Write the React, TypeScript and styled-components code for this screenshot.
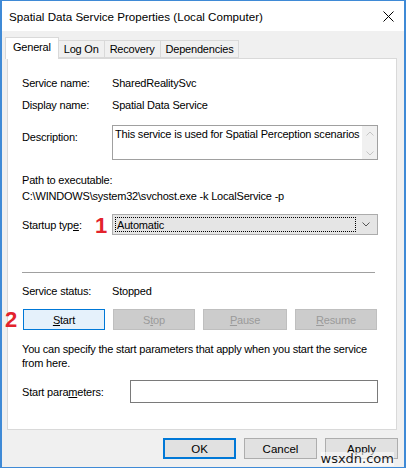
import React from "react";
import styled, { createGlobalStyle } from "styled-components";

const GlobalStyle = createGlobalStyle`
  html, body {
    margin: 0;
    padding: 0;
    background: #ffffff;
  }
  body {
    font-family: "Liberation Sans", Arial, sans-serif;
    font-size: 11px;
    letter-spacing: -0.2px;
    color: #000000;
  }
`;

const Window = styled.div`
  position: relative;
  box-sizing: border-box;
  width: 406px;
  height: 468px;
  border: 1px solid #3f8ad6;
  border-left-width: 2px;
  border-right-width: 2px;
  background: #f0f0f0;
  display: flex;
  flex-direction: column;
  overflow: hidden;
`;

const TitleBar = styled.div`
  height: 30px;
  background: #ffffff;
  display: flex;
  align-items: center;
  justify-content: space-between;
  padding: 0 10px 0 7px;
  font-size: 11.6px;
  letter-spacing: 0;
`;

const CloseGlyph = styled.svg`
  width: 11px;
  height: 11px;
`;

const TabStrip = styled.div`
  display: flex;
  align-items: flex-end;
  height: 21px;
  margin-top: 6px;
  padding-left: 3px;
  position: relative;
  z-index: 1;
`;

const Tab = styled.div<{ $active?: boolean }>`
  box-sizing: border-box;
  height: ${(p) => (p.$active ? "22px" : "18px")};
  padding: 0 ${(p) => (p.$active ? "7px" : "5px")};
  margin-bottom: ${(p) => (p.$active ? "-1px" : "0")};
  display: flex;
  align-items: center;
  background: ${(p) => (p.$active ? "#ffffff" : "#f0f0f0")};
  border: 1px solid #d9d9d9;
  border-bottom: ${(p) => (p.$active ? "none" : "1px solid #d9d9d9")};
  margin-left: ${(p) => (p.$active ? "0" : "-1px")};
  padding-bottom: ${(p) => (p.$active ? "4px" : "0")};
`;

const Panel = styled.div`
  box-sizing: border-box;
  margin: 0 7px 0 5px;
  height: 372px;
  background: #ffffff;
  border: 1px solid #d9d9d9;
  padding: 16px 18px 0 14px;
  display: flex;
  flex-direction: column;
`;

const Row = styled.div<{ $gap?: number; $top?: boolean }>`
  display: flex;
  align-items: ${(p) => (p.$top ? "flex-start" : "center")};
  margin-top: ${(p) => p.$gap ?? 0}px;
`;

const Label = styled.div<{ $w?: number; $pad?: number }>`
  width: ${(p) => p.$w ?? 90}px;
  flex-shrink: 0;
  line-height: 16px;
  padding-top: ${(p) => p.$pad ?? 0}px;
`;

const Line = styled.div<{ $gap?: number }>`
  line-height: 16px;
  margin-top: ${(p) => p.$gap ?? 0}px;
  white-space: nowrap;
`;

const DescBox = styled.div`
  box-sizing: border-box;
  width: 267px;
  height: 35px;
  border: 1px solid #a0a0a0;
  display: flex;
`;

const DescText = styled.div`
  flex: 1;
  padding: 1px 2px;
  line-height: 15px;
  white-space: nowrap;
  overflow: hidden;
`;

const ScrollTrack = styled.div`
  width: 15px;
  background: #f0f0f0;
  display: flex;
  flex-direction: column;
  justify-content: space-between;
  align-items: center;
  padding: 5px 0 3px;
`;

const Chevron = styled.svg`
  width: 8px;
  height: 5px;
`;

const Select = styled.div`
  position: relative;
  box-sizing: border-box;
  width: 267px;
  height: 21px;
  background: #e5e5e5;
  border: 1px solid #acacac;
  display: flex;
  align-items: center;
  padding: 2px;
`;

const FocusRect = styled.div`
  flex: 1;
  height: 100%;
  box-sizing: border-box;
  border: 1px dotted #000000;
  display: flex;
  align-items: center;
  padding-left: 1px;
`;

const SelectArrow = styled.div`
  width: 19px;
  display: flex;
  justify-content: center;
`;

const Marker = styled.div<{ $x: number; $y: number }>`
  position: absolute;
  left: ${(p) => p.$x}px;
  top: ${(p) => p.$y}px;
  color: #e3232c;
  font-family: "Liberation Sans", Arial, sans-serif;
  font-weight: bold;
  font-size: 22px;
  line-height: 22px;
  letter-spacing: 0;
`;

const Separator = styled.div`
  height: 1px;
  background: #a0a0a0;
  margin: 37px 3px 0 0;
`;

const ButtonRow = styled.div`
  display: grid;
  grid-template-columns: 82px 82px 84px 82px;
  column-gap: 8px;
  margin: 10px 0 0 1px;
`;

const Button = styled.div<{ $kind?: "focus" | "disabled" | "default" | "normal" }>`
  box-sizing: border-box;
  height: 21px;
  display: flex;
  align-items: center;
  justify-content: center;
  background: ${(p) =>
    p.$kind === "focus" ? "#e5f1fb" : p.$kind === "disabled" ? "#cccccc" : "#e1e1e1"};
  border: ${(p) =>
    p.$kind === "focus"
      ? "1px solid #0078d7"
      : p.$kind === "default"
      ? "2px solid #0078d7"
      : p.$kind === "disabled"
      ? "1px solid #bfbfbf"
      : "1px solid #adadad"};
  color: ${(p) => (p.$kind === "disabled" ? "#9a9a9a" : "#000000")};
`;

const Hint = styled.div`
  margin-top: 12px;
  line-height: 14px;
  padding-right: 6px;
`;

const ParamInput = styled.div`
  box-sizing: border-box;
  width: 249px;
  height: 23px;
  border: 1px solid #7a7a7a;
  background: #ffffff;
`;

const Footer = styled.div`
  display: flex;
  justify-content: flex-end;
  gap: 8px;
  padding: 8px 6px 0 0;
`;

const FooterButton = styled(Button)`
  width: 73px;
  height: 21px;
  font-size: 11.5px;
  letter-spacing: 0;
`;

const Watermark = styled.div`
  position: absolute;
  right: 10px;
  bottom: 1px;
  font-family: "DejaVu Sans", sans-serif;
  font-size: 13px;
  letter-spacing: 0;
  color: #1a1a1a;
  background: rgba(255, 255, 255, 0.55);
  line-height: 14px;
`;

const Down = () => (
  <Chevron viewBox="0 0 8 5">
    <path d="M0.5 0.5 L4 4 L7.5 0.5" fill="none" stroke="#c4c4c4" strokeWidth="1" />
  </Chevron>
);

const Up = () => (
  <Chevron viewBox="0 0 8 5">
    <path d="M0.5 4.5 L4 1 L7.5 4.5" fill="none" stroke="#c4c4c4" strokeWidth="1" />
  </Chevron>
);

export default function App() {
  return (
    <>
      <GlobalStyle />
      <Window>
        <TitleBar>
          <span>Spatial Data Service Properties (Local Computer)</span>
          <CloseGlyph viewBox="0 0 11 11">
            <path d="M0.5 0.5 L10.5 10.5 M10.5 0.5 L0.5 10.5" stroke="#000" strokeWidth="1" />
          </CloseGlyph>
        </TitleBar>

        <TabStrip>
          <Tab $active>General</Tab>
          <Tab>Log On</Tab>
          <Tab>Recovery</Tab>
          <Tab>Dependencies</Tab>
        </TabStrip>

        <Panel>
          <Row>
            <Label>Service name:</Label>
            <span>SharedRealitySvc</span>
          </Row>
          <Row $gap={6}>
            <Label>Display name:</Label>
            <span>Spatial Data Service</span>
          </Row>
          <Row $gap={12} $top>
            <Label $pad={4}>Description:</Label>
            <DescBox>
              <DescText>This service is used for Spatial Perception scenarios</DescText>
              <ScrollTrack>
                <Up />
                <Down />
              </ScrollTrack>
            </DescBox>
          </Row>
          <Line $gap={12}>Path to executable:</Line>
          <Line>C:\WINDOWS\system32\svchost.exe -k LocalService -p</Line>
          <Row $gap={10}>
            <Label>
              Startup typ<u>e</u>:
            </Label>
            <Select>
              <FocusRect>Automatic</FocusRect>
              <SelectArrow>
                <Chevron viewBox="0 0 8 5">
                  <path d="M0.5 0.5 L4 4 L7.5 0.5" fill="none" stroke="#555" strokeWidth="1" />
                </Chevron>
              </SelectArrow>
            </Select>
          </Row>

          <Separator />

          <Row $gap={10}>
            <Label>Service status:</Label>
            <span>Stopped</span>
          </Row>
          <ButtonRow>
            <Button $kind="focus">
              <span>
                <u>S</u>tart
              </span>
            </Button>
            <Button $kind="disabled">
              <span>
                S<u>t</u>op
              </span>
            </Button>
            <Button $kind="disabled">
              <span>
                <u>P</u>ause
              </span>
            </Button>
            <Button $kind="disabled">
              <span>
                <u>R</u>esume
              </span>
            </Button>
          </ButtonRow>
          <Hint>
            You can specify the start parameters that apply when you start the service from here.
          </Hint>
          <Row $gap={10}>
            <Label $w={108}>
              Start para<u>m</u>eters:
            </Label>
            <ParamInput />
          </Row>
        </Panel>

        <Footer>
          <FooterButton $kind="default">OK</FooterButton>
          <FooterButton>Cancel</FooterButton>
          <FooterButton>Apply</FooterButton>
        </Footer>

        <Marker $x={93} $y={214}>1</Marker>
        <Marker $x={3} $y={308}>2</Marker>
        <Watermark>wsxdn.com</Watermark>
      </Window>
    </>
  );
}
